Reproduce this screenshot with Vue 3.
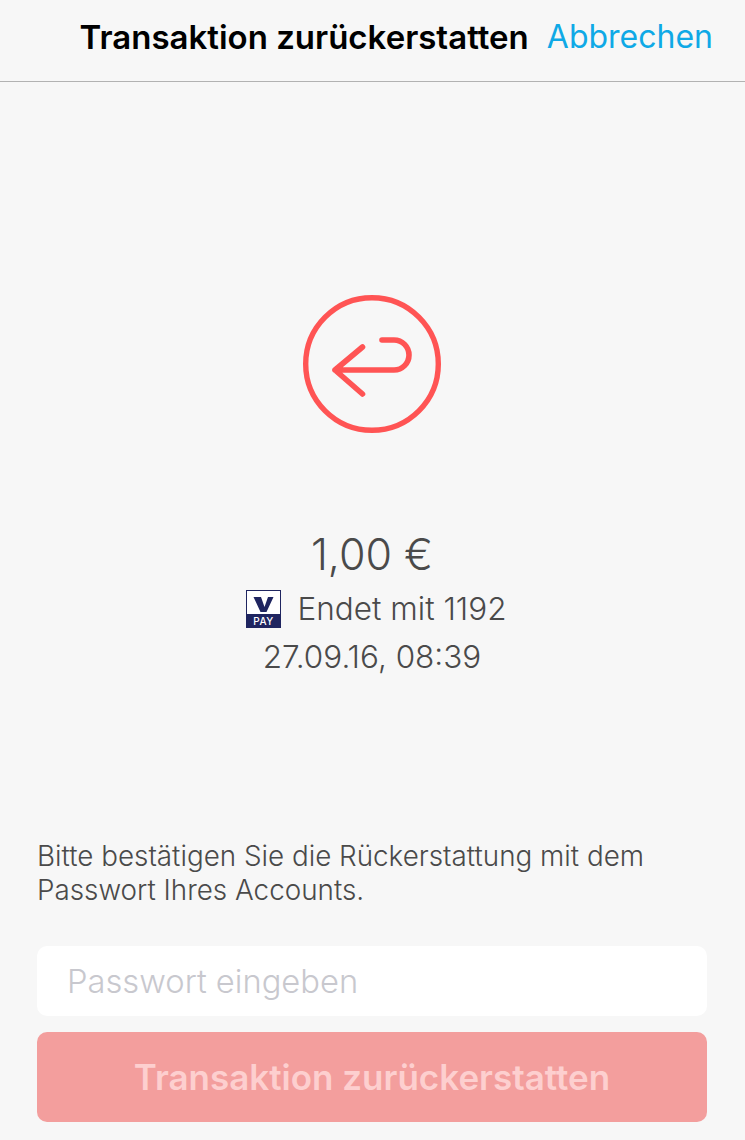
<script setup>
const title = "Transaktion zurückerstatten";
</script>

<template>
    <div class="page">
        <header>
            <h1>{{ title }}</h1>
            <a class="cancel">Abbrechen</a>
        </header>

        <main>
            <svg class="refund-icon" width="138" height="138" viewBox="0 0 138 138" fill="none">
                <circle cx="69" cy="69" r="66.300" stroke="#ff5454" stroke-width="5.400" />
                <path
                    d="M79 45 H91 a15 15 0 0 1 0 30 H32 M32 75 L59.500 52 M32 75 L59.500 99"
                    stroke="#ff5454"
                    stroke-width="5.600"
                    stroke-linecap="round"
                    stroke-linejoin="round"
                />
            </svg>

            <div class="amount">1,00 €</div>
            <div class="card">
                <svg class="vpay" width="35" height="38" viewBox="0 0 35 38">
                    <rect x="0.500" y="0.500" width="34" height="37" fill="#fff" stroke="#1f2560" />
                    <rect x="0" y="24" width="35" height="14" fill="#1f2560" />
                    <path d="M7.500 7 H15 L18.500 17 L22 7 H27.500 L20.500 22 H14.500 Z" fill="#1f2560" />
                    <text x="17.500" y="35" text-anchor="middle" class="vpay-text">PAY</text>
                </svg>
                <span>Endet mit 1192</span>
            </div>
            <div class="date">27.09.16, 08:39</div>

            <p class="hint">
                Bitte bestätigen Sie die Rückerstattung mit dem<br>Passwort Ihres Accounts.
            </p>

            <input type="password" placeholder="Passwort eingeben">
            <button disabled>{{ title }}</button>
        </main>
    </div>
</template>

<style>
    body {
        background-color: #f7f7f7;
    }
</style>

<style scoped>
    .page {
        width: 745px;
        height: 1140px;
        overflow: hidden;
        background-color: #f7f7f7;
        font-family: Inter, "Liberation Sans", sans-serif;
        color: #4a4a4a;
    }

    header {
        height: 82px;
        box-sizing: border-box;
        border-bottom: 1px solid #b2b2b2;
        display: flex;
        justify-content: flex-end;
        align-items: center;
        gap: 18px;
        padding: 0 32px 8px 0;
    }

    h1 {
        margin: 0;
        font-size: 33px;
        font-weight: 600;
        color: #000;
    }

    .cancel {
        font-size: 32px;
        color: #0fa9e6;
    }

    main {
        display: flex;
        flex-direction: column;
        align-items: center;
        padding: 213px 38px 0 37px;
    }

    .refund-icon {
        margin-left: -1px;
    }

    .amount {
        margin-top: 95px;
        font-size: 43px;
        line-height: 52px;
        font-weight: 300;
    }

    .card {
        margin: 10px 0 0 8px;
        display: flex;
        align-items: center;
        gap: 17px;
        font-size: 31.500px;
        line-height: 38px;
        font-weight: 300;
    }

    .vpay-text {
        font-size: 10px;
        font-weight: 500;
        fill: #fff;
        letter-spacing: 0.5px;
    }

    .date {
        margin-top: 10px;
        font-size: 31.500px;
        line-height: 38px;
        font-weight: 300;
    }

    .hint {
        align-self: stretch;
        margin: 163px 0 0;
        font-size: 27.800px;
        line-height: 34px;
        font-weight: 300;
    }

    input {
        align-self: stretch;
        height: 70px;
        box-sizing: border-box;
        margin-top: 39px;
        padding: 0 30px;
        border: none;
        border-radius: 10px;
        background-color: #fff;
        font-family: inherit;
        font-size: 32.700px;
    }

    input::placeholder {
        color: #c8c8ce;
        font-weight: 300;
        opacity: 1;
    }

    button {
        align-self: stretch;
        height: 90px;
        margin-top: 16px;
        border: none;
        border-radius: 10px;
        background-color: #f39e9d;
        color: #fdcfcf;
        font-family: inherit;
        font-size: 35px;
        font-weight: 600;
    }
</style>
